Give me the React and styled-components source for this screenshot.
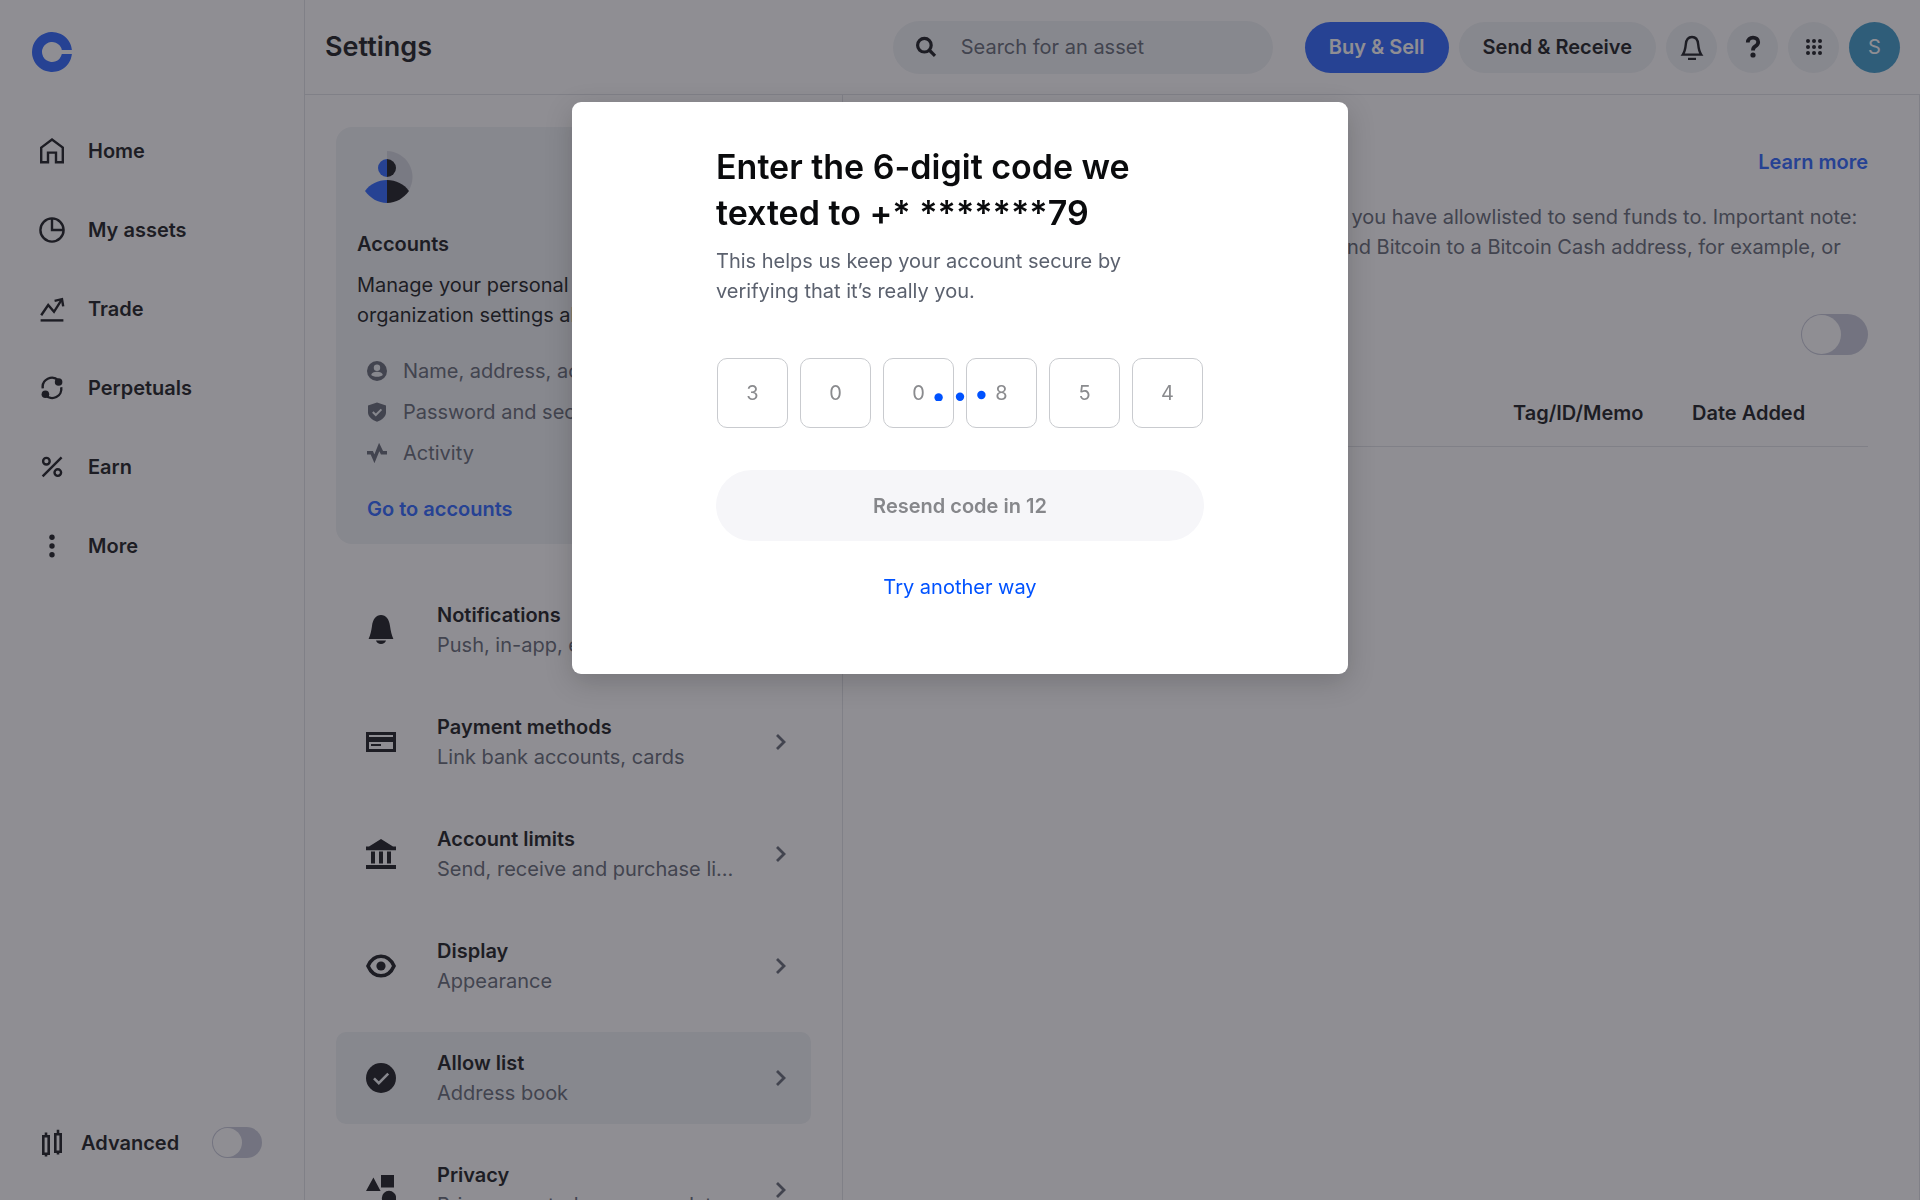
import React from 'react';
import styled, { createGlobalStyle, ThemeProvider, css } from 'styled-components';

const theme = {
  text: '#1a1c20',
  muted: '#646a76',
  blue: '#2c66ff',
  line: '#e0e2e6',
  fill: '#eff2f4',
};

const GlobalStyle = createGlobalStyle`
  * {
    box-sizing: border-box;
  }

  body {
    margin: 0;
    background: #fff;
    font-family: Inter, 'Liberation Sans', sans-serif;
    font-size: 20px;
    line-height: 30px;
  }

  button,
  input {
    font: inherit;
  }
`;

const Page = styled.div`
  display: flex;
  height: 100vh;
  overflow: hidden;
  color: ${({ theme: t }) => t.text};
`;

/* Sidebar */

const Sidebar = styled.aside`
  display: flex;
  flex-direction: column;
  flex: none;
  width: 305px;
  padding: 32px 42px 42px 32px;
  border-right: 1px solid ${({ theme: t }) => t.line};
`;

const LogoLink = styled.a`
  display: block;
  width: 40px;
  height: 40px;
  margin-bottom: 39px;

  svg {
    display: block;
  }
`;

const NavLink = styled.a`
  display: flex;
  align-items: center;
  gap: 23px;
  height: 79px;
  padding-left: 7px;
  color: inherit;
  font-weight: 600;
  text-decoration: none;
`;

const AdvancedRow = styled.label`
  display: flex;
  align-items: center;
  gap: 14px;
  margin-top: auto;
  padding-left: 7px;
  font-weight: 600;

  input {
    margin-left: auto;
  }
`;

const Switch = styled.input.attrs({ type: 'checkbox', role: 'switch' })`
  appearance: none;
  flex: none;
  display: flex;
  width: ${({ $large }) => ($large ? 67 : 50)}px;
  height: ${({ $large }) => ($large ? 41 : 31)}px;
  margin: 0;
  padding: 1px;
  border-radius: 21px;
  background: #c6c9d8;

  &::before {
    content: '';
    height: 100%;
    aspect-ratio: 1;
    border-radius: 50%;
    background: #fff;
  }

  &:checked {
    justify-content: flex-end;
    background: ${({ theme: t }) => t.blue};
  }
`;

/* Header */

const Body = styled.div`
  display: flex;
  flex-direction: column;
  flex: 1;
  min-width: 0;
`;

const Header = styled.header`
  display: flex;
  align-items: center;
  gap: 10px;
  flex: none;
  height: 95px;
  padding: 0 20px;
  border-bottom: 1px solid ${({ theme: t }) => t.line};
`;

const PageTitle = styled.h1`
  flex: 1;
  margin: 0;
  font-size: 27px;
  font-weight: 600;
`;

const SearchBox = styled.label`
  display: flex;
  align-items: center;
  gap: 24px;
  width: 380px;
  height: 53px;
  margin-right: 22px;
  padding: 0 22px;
  border-radius: 27px;
  background: ${({ theme: t }) => t.fill};

  input {
    flex: 1;
    min-width: 0;
    padding: 0;
    border: 0;
    outline: 0;
    background: none;
  }

  input::placeholder {
    color: ${({ theme: t }) => t.muted};
    opacity: 1;
  }
`;

const PillButton = styled.button`
  height: 51px;
  padding: 0 24px;
  border: 0;
  border-radius: 26px;
  background: ${({ theme: t }) => t.fill};
  color: inherit;
  font-weight: 600;
  white-space: nowrap;

  ${({ $primary, theme: t }) => $primary && css`
    background: ${t.blue};
    color: #fff;
  `}
`;

const RoundButton = styled.button`
  display: flex;
  align-items: center;
  justify-content: center;
  flex: none;
  width: 51px;
  height: 51px;
  padding: 0;
  border: 0;
  border-radius: 50%;
  background: ${({ $avatar, theme: t }) => ($avatar ? '#3f9ccb' : t.fill)};
  color: ${({ $avatar }) => ($avatar ? '#fff' : 'inherit')};
`;

/* Settings column */

const Columns = styled.div`
  display: flex;
  flex: 1;
  min-height: 0;
`;

const SettingsColumn = styled.section`
  flex: none;
  width: 538px;
  padding: 32px 31px 0;
  border-right: 1px solid ${({ theme: t }) => t.line};
`;

const AccountCard = styled.div`
  margin-bottom: 40px;
  padding: 24px 21px 20px;
  border-radius: 16px;
  background: ${({ theme: t }) => t.fill};

  h2 {
    margin: 26px 0 11px;
    font-size: 20px;
    font-weight: 600;
    line-height: 30px;
  }

  p {
    margin: 0 0 20px;
  }

  > svg {
    display: block;
    margin-left: 4px;
  }
`;

const FeatureList = styled.ul`
  margin: 0 0 21px;
  padding: 0 0 0 10px;
  list-style: none;
  color: ${({ theme: t }) => t.muted};

  li {
    display: flex;
    align-items: center;
    gap: 16px;
    height: 41px;
  }
`;

const BlueLink = styled.a`
  color: ${({ theme: t }) => t.blue};
  font-weight: 600;
  text-decoration: none;
`;

const CardLink = styled(BlueLink)`
  display: block;
  padding-left: 10px;
`;

const SettingRow = styled.a`
  display: flex;
  align-items: center;
  height: 92px;
  margin-bottom: 20px;
  padding: 0 22px 0 30px;
  border-radius: 10px;
  background: ${({ $active, theme: t }) => ($active ? t.fill : 'none')};
  color: inherit;
  text-decoration: none;

  svg {
    flex: none;
  }
`;

const SettingText = styled.span`
  display: flex;
  flex-direction: column;
  flex: 1;
  min-width: 0;
  margin: 0 39px 0 41px;
`;

const SettingName = styled.span`
  font-weight: 600;
`;

const SettingHint = styled.span`
  overflow: hidden;
  color: ${({ theme: t }) => t.muted};
  text-overflow: ellipsis;
  white-space: nowrap;
`;

/* Allow list */

const Main = styled.main`
  flex: 1;
  min-width: 0;
  padding: 52px 51px 0;
  border-right: 1px solid ${({ theme: t }) => t.line};
`;

const MainHead = styled.div`
  display: flex;
  align-items: center;
  justify-content: space-between;
  margin-bottom: 25px;

  h2 {
    margin: 0;
    font-size: 20px;
    line-height: 30px;
  }
`;

const Intro = styled.p`
  margin: 0 0 22px;
  color: ${({ theme: t }) => t.muted};

  span {
    display: block;
    white-space: nowrap;
  }
`;

const ToggleRow = styled.label`
  display: flex;
  align-items: center;
  justify-content: space-between;
  margin-bottom: 25px;
  font-weight: 600;
`;

const AddressTable = styled.table`
  width: 100%;
  border-collapse: collapse;

  th {
    height: 66px;
    padding: 0;
    border-bottom: 1px solid ${({ theme: t }) => t.line};
    font-weight: 600;
    text-align: left;
  }

  th:nth-child(3) {
    width: 179px;
  }

  th:nth-child(4) {
    width: 176px;
  }
`;

/* Two-step code dialog */

const Overlay = styled.div`
  position: fixed;
  inset: 0;
  display: flex;
  align-items: flex-start;
  justify-content: center;
  padding-top: 102px;
  background: rgba(32, 30, 40, 0.5);
`;

const Dialog = styled.div`
  width: 776px;
  padding: 42px 144px 72px;
  border-radius: 9px;
  background: #fff;
  box-shadow: 0 8px 28px rgba(0, 0, 0, 0.18);
  text-align: center;

  h2,
  p {
    text-align: left;
  }

  h2 {
    margin: 0;
    color: #0a0b0d;
    font-size: 34px;
    font-weight: 600;
    line-height: 46px;
  }

  p {
    margin: 10px 0 52px;
    color: #5b616e;
  }
`;

const CodeFields = styled.fieldset`
  position: relative;
  display: grid;
  grid-template-columns: repeat(6, 1fr);
  gap: 12px;
  margin: 0 0 42px;
  padding: 0 1px;
  border: 0;
`;

const CodeInput = styled.input`
  width: 100%;
  min-width: 0;
  height: 70px;
  padding: 0;
  border: 1px solid #c9cbcf;
  border-radius: 10px;
  color: #8a8b8e;
  text-align: center;
`;

const Spinner = styled.svg`
  position: absolute;
  top: 50%;
  left: 50%;
  transform: translate(-50%, -50%);
`;

const ResendButton = styled.button`
  display: block;
  width: 100%;
  height: 71px;
  margin-bottom: 31px;
  border: 0;
  border-radius: 36px;
  background: #f6f6f9;
  color: #86878b;
  font-weight: 600;
`;

const OtherWayLink = styled.a`
  color: #0052ff;
  text-decoration: none;
`;

/* Icons */

const Icon = ({ size = 26, children, ...rest }) => (
  <svg
    width={size}
    height={size}
    viewBox={`0 0 ${size} ${size}`}
    fill="none"
    stroke="currentColor"
    strokeWidth="2.4"
    aria-hidden="true"
    {...rest}
  >
    {children}
  </svg>
);

const HomeIcon = () => (
  <Icon>
    <path d="M2.2 9.6 13 1.6l10.800 8v14.600h-6.800v-9.600h-8v9.600H2.200z" />
  </Icon>
);

const AssetsIcon = () => (
  <Icon>
    <circle cx="13" cy="13" r="11.6" />
    <path d="M13 1.6V13h11.4" />
  </Icon>
);

const TradeIcon = () => (
  <Icon>
    <path d="M1.600 24.400h22.800" />
    <path d="M2.200 19.200 9.200 9l5.800 6.800 7.400-11.600" />
    <path d="m15.600 4.800 7.400-1.600 1.200 7.200" />
  </Icon>
);

const PerpetualsIcon = () => (
  <Icon>
    <path d="M3.800 13.400A9.200 9.200 0 0 1 19.500 5.600" />
    <path d="M22.200 12.200A9.200 9.200 0 0 1 6.500 20.200" />
    <circle cx="19.6" cy="7" r="3.8" fill="currentColor" stroke="none" />
    <circle cx="6.4" cy="19.2" r="3.8" fill="currentColor" stroke="none" />
  </Icon>
);

const EarnIcon = () => (
  <Icon>
    <circle cx="7.4" cy="7.2" r="3.3" />
    <circle cx="18.8" cy="18.6" r="3.3" />
    <path d="M3.6 22.4 22.6 3.4" />
  </Icon>
);

const MoreIcon = () => (
  <Icon fill="currentColor" stroke="none">
    <circle cx="13" cy="4.2" r="2.7" />
    <circle cx="13" cy="13" r="2.7" />
    <circle cx="13" cy="21.8" r="2.7" />
  </Icon>
);

const CandlesIcon = () => (
  <Icon size={28} strokeWidth="2.600">
    <path d="M4.300 7.300h5.400v17.400H4.300zM16.300 5.300h5.400v17.400h-5.400zM7 3.400v4M7 24.600v3M19 .8v4.600M19 22.600v3" />
  </Icon>
);

const SearchIcon = () => (
  <Icon size={22} strokeWidth="3.2">
    <circle cx="9.4" cy="9.2" r="6.8" />
    <path d="m14.2 14 5.8 5.8" />
  </Icon>
);

const BellIcon = () => (
  <Icon>
    <path d="M3.800 20.600h18.400c-2-3-2.600-6-3-10.200C18.800 5.600 16.600 3 13 3s-5.800 2.600-6.200 7.400c-.4 4.200-1 7.200-3 10.200z" />
    <path d="M9 25h8" />
  </Icon>
);

const HelpIcon = () => (
  <Icon strokeWidth="3.8">
    <path d="M7.800 8.400c0-3 2.200-4.800 5.200-4.800s5.200 1.700 5.200 4.400c0 2.400-1.400 3.400-3 4.400-1.500.9-2.200 1.700-2.200 4" />
    <circle cx="13" cy="21" r="2.600" fill="currentColor" stroke="none" />
  </Icon>
);

const GridIcon = () => (
  <Icon size={18} fill="currentColor" stroke="none">
    {[3, 9, 15].map(y => [3, 9, 15].map(x => <circle key={`${x}-${y}`} cx={x} cy={y} r="2" />))}
  </Icon>
);

const AccountArt = () => (
  <svg width="52" height="52" viewBox="0 0 52 52" aria-hidden="true">
    <path d="M26 0a26 26 0 0 1 22 39L26 30z" fill="#d3d6df" />
    <path d="M26 8a9 9 0 0 0 0 18z" fill="#2c66ff" />
    <path d="M26 8a9 9 0 0 1 0 18z" fill="#1a1c20" />
    <path d="M26 29C17 29 9 33 4 40c5 7 13 12 22 12z" fill="#2c66ff" />
    <path d="M26 29c9 0 17 4 22 11-5 7-13 12-22 12z" fill="#1a1c20" />
  </svg>
);

const PersonIcon = () => (
  <Icon size={20} stroke="none">
    <circle cx="10" cy="10" r="10" fill="currentColor" />
    <circle cx="10" cy="6.800" r="3.200" fill="#eff2f4" />
    <path d="M4.200 14C4.600 11.600 7 10.800 10 10.800s5.400.8 5.800 3.200c-1.200 1.200-3.300 1.800-5.800 1.800s-4.600-.6-5.800-1.800z" fill="#eff2f4" />
  </Icon>
);

const ShieldIcon = () => (
  <Icon size={20}>
    <path d="m10 .4 9 3v6.800c0 4.600-4.200 7.600-9 9.600-4.800-2-9-5-9-9.600V3.400z" fill="currentColor" stroke="none" />
    <path d="m5.800 10 3 3 5.600-5.600" stroke="#eff2f4" strokeWidth="2" />
  </Icon>
);

const ActivityIcon = () => (
  <Icon size={20} strokeWidth="3.400">
    <path d="M0 9.800h4.800l2.600 6L12.200 4l2.800 5.800h5" />
  </Icon>
);

const NotificationsIcon = () => (
  <Icon size={30} fill="currentColor" stroke="none">
    <path d="M2.600 24h24.800c-1.800-4-2.600-7.600-3.400-13C23.200 4.200 20 0 15 0S6.800 4.200 6 11c-.8 5.400-1.600 9-3.400 13zM10 25.600h10a5.200 4.800 0 0 1-10 0z" />
  </Icon>
);

const CardIcon = () => (
  <Icon size={30} fill="currentColor" stroke="none">
    <path fillRule="evenodd" d="M0 5h30v20H0zm3 3v2h24V8zm0 7v7h24v-7z" />
    <path d="M5 17h10v2H5z" />
  </Icon>
);

const BankIcon = () => (
  <Icon size={30} fill="currentColor" stroke="none">
    <path d="M15 0 27 7.400h3v3.800H0V7.400h3zM5 12.400h4v12H5zM13 12.400h4v12h-4zM21 12.400h4v12h-4zM0 26h30v4H0z" />
  </Icon>
);

const EyeIcon = () => (
  <Icon size={30} strokeWidth="3.600">
    <path d="M2 15c2.800-6.400 7.400-9.800 13-9.800S25.200 8.600 28 15c-2.800 6.400-7.400 9.800-13 9.800S4.800 21.400 2 15z" />
    <circle cx="15" cy="15" r="4.600" fill="currentColor" stroke="none" />
  </Icon>
);

const CheckIcon = () => (
  <Icon size={30}>
    <circle cx="15" cy="15" r="15" fill="currentColor" stroke="none" />
    <path d="m8 15.400 4.800 4.800 9.400-9.600" stroke="#eff2f4" strokeWidth="2.600" />
  </Icon>
);

const ShapesIcon = () => (
  <Icon size={30} fill="currentColor" stroke="none">
    <path d="M7.400 2.400 14.600 16H0zM15 0h13v12.600H15z" />
    <circle cx="23" cy="23" r="7.200" />
  </Icon>
);

const ChevronIcon = () => (
  <Icon size={16} strokeWidth="2.800" color="#646a76">
    <path d="m4 1 7 7-7 7" />
  </Icon>
);

const navItems = [
  { label: 'Home', Glyph: HomeIcon },
  { label: 'My assets', Glyph: AssetsIcon },
  { label: 'Trade', Glyph: TradeIcon },
  { label: 'Perpetuals', Glyph: PerpetualsIcon },
  { label: 'Earn', Glyph: EarnIcon },
  { label: 'More', Glyph: MoreIcon },
];

const settings = [
  { name: 'Notifications', hint: 'Push, in-app, email', Glyph: NotificationsIcon },
  { name: 'Payment methods', hint: 'Link bank accounts, cards', Glyph: CardIcon },
  { name: 'Account limits', hint: 'Send, receive and purchase limits', Glyph: BankIcon },
  { name: 'Display', hint: 'Appearance', Glyph: EyeIcon },
  { name: 'Allow list', hint: 'Address book', Glyph: CheckIcon, active: true },
  { name: 'Privacy', hint: 'Privacy controls, manage data', Glyph: ShapesIcon },
];

const code = ['3', '0', '0', '8', '5', '4'];

const CodeDialog = () => (
  <Overlay>
    <Dialog role="dialog" aria-modal="true" aria-labelledby="code-title">
      <h2 id="code-title">
        Enter the 6-digit code we
        <br />
        texted to +* *******79
      </h2>
      <p>
        This helps us keep your account secure by
        <br />
        verifying that it’s really you.
      </p>
      <CodeFields>
        {code.map((digit, i) => (
          <CodeInput
            key={i}
            defaultValue={digit}
            maxLength={1}
            inputMode="numeric"
            aria-label={`Digit ${i + 1}`}
          />
        ))}
        <Spinner width="52" height="16" viewBox="0 0 52 16" fill="#0052ff" aria-hidden="true">
          <circle cx="4.600" cy="12.500" r="4.200" />
          <circle cx="26" cy="11.700" r="4.200" />
          <circle cx="47.400" cy="10" r="4.200" />
        </Spinner>
      </CodeFields>
      <ResendButton type="button" disabled>Resend code in 12</ResendButton>
      <OtherWayLink href="#other">Try another way</OtherWayLink>
    </Dialog>
  </Overlay>
);

const App = () => (
  <ThemeProvider theme={theme}>
    <GlobalStyle />
    <Page>
      <Sidebar>
        <LogoLink href="#home" aria-label="Home page">
          <svg width="40" height="40" viewBox="0 0 40 40" aria-hidden="true">
            <path
              d="M39.900 18H29.800a10 10 0 1 0 0 4h10.100A20 20 0 1 1 39.900 18z"
              fill="#2c66ff"
            />
          </svg>
        </LogoLink>
        <nav>
          {navItems.map(({ label, Glyph }) => (
            <NavLink key={label} href="#nav">
              <Glyph />
              {label}
            </NavLink>
          ))}
        </nav>
        <AdvancedRow>
          <CandlesIcon />
          Advanced
          <Switch />
        </AdvancedRow>
      </Sidebar>

      <Body>
        <Header>
          <PageTitle>Settings</PageTitle>
          <SearchBox>
            <SearchIcon />
            <input type="text" placeholder="Search for an asset" aria-label="Search for an asset" />
          </SearchBox>
          <PillButton type="button" $primary>Buy &amp; Sell</PillButton>
          <PillButton type="button">Send &amp; Receive</PillButton>
          <RoundButton type="button" aria-label="Notifications"><BellIcon /></RoundButton>
          <RoundButton type="button" aria-label="Help"><HelpIcon /></RoundButton>
          <RoundButton type="button" aria-label="Apps"><GridIcon /></RoundButton>
          <RoundButton type="button" $avatar>S</RoundButton>
        </Header>

        <Columns>
          <SettingsColumn>
            <AccountCard>
              <AccountArt />
              <h2>Accounts</h2>
              <p>
                Manage your personal and
                <br />
                organization settings all in one place
              </p>
              <FeatureList>
                <li>
                  <PersonIcon />
                  Name, address, account
                </li>
                <li>
                  <ShieldIcon />
                  Password and security
                </li>
                <li>
                  <ActivityIcon />
                  Activity
                </li>
              </FeatureList>
              <CardLink href="#accounts">Go to accounts</CardLink>
            </AccountCard>
            {settings.map(({ name, hint, Glyph, active }) => (
              <SettingRow key={name} href="#setting" $active={active}>
                <Glyph />
                <SettingText>
                  <SettingName>{name}</SettingName>
                  <SettingHint>{hint}</SettingHint>
                </SettingText>
                <ChevronIcon />
              </SettingRow>
            ))}
          </SettingsColumn>

          <Main>
            <MainHead>
              <h2>Allow list</h2>
              <BlueLink href="#learn">Learn more</BlueLink>
            </MainHead>
            <Intro>
              <span>
                The address book lists all crypto addresses that you have allowlisted to send
                funds to. Important note:
              </span>
              <span>
                Check every address before use. You cannot send Bitcoin to a Bitcoin Cash
                address, for example, or
              </span>
              <span>your funds may be lost.</span>
            </Intro>
            <ToggleRow>
              Enable allowlist
              <Switch $large />
            </ToggleRow>
            <AddressTable>
              <thead>
                <tr>
                  <th>Nickname</th>
                  <th>Address</th>
                  <th>Tag/ID/Memo</th>
                  <th>Date Added</th>
                </tr>
              </thead>
            </AddressTable>
          </Main>
        </Columns>
      </Body>
    </Page>
    <CodeDialog />
  </ThemeProvider>
);

export default App;
